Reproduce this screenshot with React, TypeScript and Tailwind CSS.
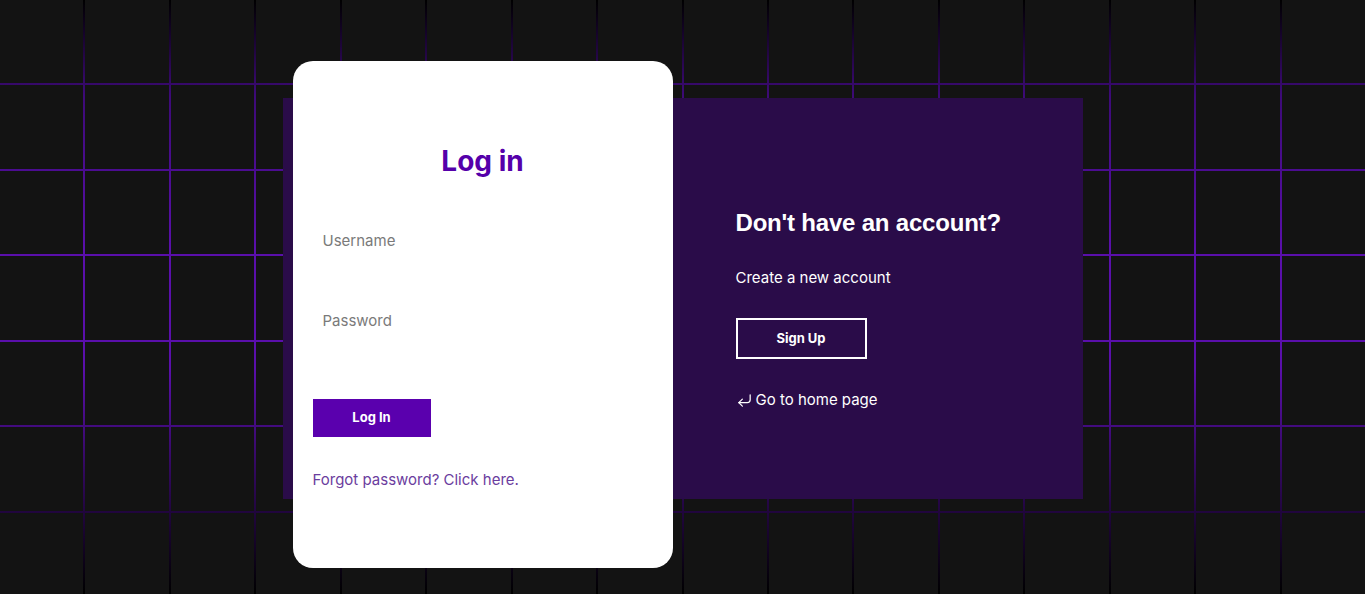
import { CornerDownLeft } from "lucide-react";

const cells = Array.from({ length: 112 });

export default function App() {
  return (
    <div className="relative h-[594px] w-full overflow-hidden bg-black font-['Inter',sans-serif]">
      {/* Grid backdrop */}
      <div className="absolute inset-0 bg-[linear-gradient(to_bottom,#000_0%,#3d0a78_16%,#5a0fab_42%,#5a0fab_62%,#000_100%)]">
        <div className="grid grid-cols-16 gap-[2px]">
          {cells.map((_, i) => (
            <div key={i} className="aspect-square bg-[#131313]" />
          ))}
        </div>
      </div>

      <div className="relative flex h-full items-center justify-center">
        <div className="mt-[3px] flex h-[401px] w-[800px] bg-[#2a0c49] pl-[10px]">
          {/* Login card */}
          <div className="-mt-[37px] flex h-[507px] w-[380px] shrink-0 flex-col rounded-[20px] bg-white px-5 pt-[82px]">
            <h1 className="text-center text-[28px] font-bold leading-[36px] text-[#5500aa]">Log in</h1>
            <input
              placeholder="Username"
              className="mt-[41px] h-[40px] w-full px-[10px] text-[15px] text-gray-700 outline-none placeholder:text-[#7a7a7a]"
            />
            <input
              type="password"
              placeholder="Password"
              className="mt-[40px] h-[40px] w-full px-[10px] text-[15px] text-gray-700 outline-none placeholder:text-[#7a7a7a]"
            />
            <button className="mt-[59px] h-[38px] w-[118px] bg-[#5a00ae] text-[13px] font-bold text-white">
              Log In
            </button>
            <a className="mt-[33px] text-[15px] leading-[20px] text-[#6b3d9e]">Forgot password? Click here.</a>
          </div>

          {/* Sign up side */}
          <div className="flex flex-1 flex-col items-start pl-[63px] pt-[111px] text-white">
            <h2 className="font-['Liberation_Sans',sans-serif] text-[24px] font-bold leading-[28px] tracking-[-0.2px]">
              Don't have an account?
            </h2>
            <p className="mt-[31px] text-[15px] leading-[20px]">Create a new account</p>
            <button className="mt-[30px] h-[41px] w-[131px] border-2 border-white text-[13px] font-bold">
              Sign Up
            </button>
            <a className="mt-[31px] flex items-center gap-[3px] text-[15px] leading-[20px]">
              <CornerDownLeft size={17} strokeWidth={1.75} />
              Go to home page
            </a>
          </div>
        </div>
      </div>
    </div>
  );
}
